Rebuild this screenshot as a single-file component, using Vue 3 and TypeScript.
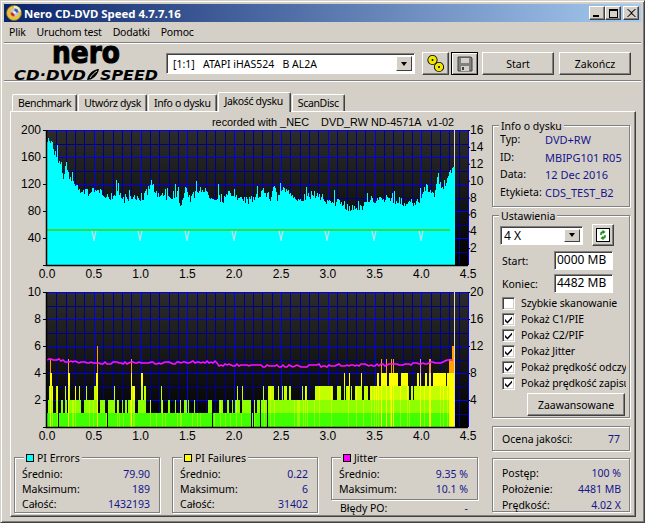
<template>
  <div class="window">
    <div class="titlebar">
      <svg class="app-icon" width="16" height="16" viewBox="0 0 16 16">
        <circle cx="8" cy="8" r="7.5" fill="#e8c040" stroke="#806820" stroke-width="0.8" />
        <path d="M8 .8a7.2 7.2 0 0 1 7 5.6L8 8z" fill="#f4ecc0" />
        <circle cx="8.5" cy="7.5" r="4" fill="#c0c8d8" />
        <path d="M8.5 3.5a4 4 0 0 1 4 4h-4z" fill="#3060c0" />
        <path d="M8.5 7.5v4a4 4 0 0 1-4-4z" fill="#d03020" />
        <circle cx="8.5" cy="7.5" r="1.3" fill="#fff" />
      </svg>
      <span class="title">Nero CD-DVD Speed 4.7.7.16</span>
      <div class="caption-buttons">
        <button type="button" class="caption-btn"><i class="glyph-min"></i></button>
        <button type="button" class="caption-btn"><i class="glyph-max"></i></button>
        <button type="button" class="caption-btn close">
          <svg width="9" height="8" viewBox="0 0 9 8"><path d="M1 0l3.5 3L8 0h1L5 4l4 4H8L4.500 5 1 8H0l4-4-4-4z" fill="#000" /></svg>
        </button>
      </div>
    </div>

    <div class="menu">
      <span v-for="item in menuItems" :key="item">{{ item }}</span>
    </div>

    <div class="toolbar">
      <svg class="logo" width="150" height="48" viewBox="0 0 150 48">
        <text x="44" y="25" class="logo-nero" textLength="68" lengthAdjust="spacingAndGlyphs">nero</text>
        <text x="6" y="42" class="logo-sub" textLength="72" lengthAdjust="spacingAndGlyphs">CD·DVD</text>
        <path d="M79 42c1-6 6-11 12-11-1 6-6 11-12 11z" fill="#000" />
        <path d="M82 40c2-3 4-5 7-7" stroke="#d4d0c8" stroke-width="1" fill="none" />
        <text x="92" y="42" class="logo-sub" textLength="58" lengthAdjust="spacingAndGlyphs">SPEED</text>
      </svg>
      <div class="combo drive-combo">
        <span class="combo-text">{{ driveLabel }}</span>
        <span class="combo-arrow"><i></i></span>
      </div>
      <button type="button" class="btn icon-btn">
        <svg width="20" height="20" viewBox="0 0 20 20">
          <g fill="none" stroke="#000" stroke-width="5">
            <circle cx="6.500" cy="6" r="2.600" />
            <circle cx="13" cy="13" r="2.600" />
          </g>
          <g fill="none" stroke="#f0e800" stroke-width="3.200">
            <circle cx="6.500" cy="6" r="2.600" />
            <circle cx="13" cy="13" r="2.600" />
          </g>
        </svg>
      </button>
      <button type="button" class="btn icon-btn save-btn">
        <svg width="16" height="16" viewBox="0 0 16 16">
          <path d="M1 1h13l1 1v13H1z" fill="#808080" stroke="#404040" />
          <rect x="4" y="2" width="8" height="5" fill="#d4d0c8" />
          <rect x="4" y="10" width="8" height="5" fill="#d4d0c8" />
          <rect x="5" y="11" width="2" height="3" fill="#404040" />
        </svg>
      </button>
      <button type="button" class="btn action-btn">Start</button>
      <button type="button" class="btn action-btn">Zakończ</button>
    </div>

    <div class="tabs">
      <span
        v-for="tab in tabs"
        :key="tab"
        class="tab"
        :class="{ active: tab === 'Jakość dysku' }"
      >{{ tab }}</span>
    </div>

    <div class="panel">
      <div class="main">
        <svg
          v-for="(chart, index) in charts"
          :key="chart.id"
          class="chart"
          :width="SVG_WIDTH"
          :height="chart.height"
        >
          <text v-if="index === 0" x="201" y="14" class="chart-title">{{ chartTitle }}</text>
          <g :transform="`translate(${PLOT_LEFT} ${chart.top})`">
            <rect :width="PLOT_WIDTH" :height="PLOT_HEIGHT" fill="url(#plotbg)" />
            <path :d="gridMinor" class="grid-minor" />
            <path :d="gridMajor" class="grid-major" />
            <template v-if="chart.id === 'pie'">
              <path :d="cyanPath" fill="#00ffff" shape-rendering="crispEdges" />
              <polyline points="0,100 403,100" class="speed-line" />
              <polyline
                v-for="x in notches"
                :key="x"
                :points="`${x - 2},101 ${x - 1},105 ${x},111 ${x + 1},105 ${x + 2},101`"
                class="notch"
              />
              <line :x1="DATA_END" :x2="DATA_END" y1="0" y2="37" class="end-line" />
            </template>
            <template v-else>
              <path
                v-for="layer in pifLayers"
                :key="layer.color"
                :d="layer.d"
                :fill="layer.color"
                shape-rendering="crispEdges"
              />
              <polyline :points="jitterPoints" class="jitter-line" />
              <line :x1="DATA_END" :x2="DATA_END" y1="0" :y2="PLOT_HEIGHT" class="end-line" />
            </template>
            <path :d="`M-.5 0V${PLOT_HEIGHT + .5}H${PLOT_WIDTH}`" class="axis" />
            <path :d="axisTicks(chart)" class="axis-tick" />

            <text
              v-for="label in chart.left"
              :key="label.text"
              x="-6"
              :y="label.y + 4"
              text-anchor="end"
              class="axis-label"
            >{{ label.text }}</text>
            <text
              v-for="label in chart.right"
              :key="label.text"
              :x="PLOT_WIDTH + 2"
              :y="label.y + 4"
              class="axis-label"
            >{{ label.text }}</text>
            <text
              v-for="label in xLabels"
              :key="label.text"
              :x="label.x"
              :y="PLOT_HEIGHT + 13"
              text-anchor="middle"
              class="axis-label"
            >{{ label.text }}</text>
          </g>
          <defs v-if="index === 0">
            <linearGradient id="plotbg" x1="0" y1="0" x2="0" y2="1">
              <stop offset="0" stop-color="#2c2c2c" />
              <stop offset="1" stop-color="#000" />
            </linearGradient>
          </defs>
        </svg>

        <div class="stats">
          <div v-for="stat in stats" :key="stat.name" class="stat-col">
            <div class="group stat-group">
              <span class="legend"><i class="swatch" :class="stat.swatch"></i>{{ stat.name }}</span>
              <div v-for="row in stat.rows" :key="row[0]" class="stat-row">
                <span>{{ row[0] }}</span><span class="value">{{ row[1] }}</span>
              </div>
            </div>
            <div v-if="stat.swatch === 'magenta'" class="po-row">
              <span>Błędy PO:</span><span class="value">-</span>
            </div>
          </div>
        </div>
      </div>

      <aside class="side">
        <div class="group info">
          <span class="legend">Info o dysku</span>
          <div v-for="row in discInfo" :key="row[0]" class="info-row">
            <span>{{ row[0] }}</span><span class="value">{{ row[1] }}</span>
          </div>
        </div>

        <div class="group settings">
          <span class="legend">Ustawienia</span>
          <div class="speed-row">
            <div class="combo speed-combo">
              <span class="combo-text">4 X</span>
              <span class="combo-arrow"><i></i></span>
            </div>
            <button type="button" class="btn refresh-btn">
              <svg width="14" height="14" viewBox="0 0 14 14">
                <rect x=".5" y=".5" width="13" height="13" fill="#fff" stroke="#000" />
                <path d="M5 7V5.500C5 4.500 5.800 4 7 4" fill="none" stroke="#109010" stroke-width="1.500" />
                <path d="M6.500 1.800L9.500 4 6.500 6.200z" fill="#109010" />
                <path d="M9 7v1.500C9 9.500 8.200 10 7 10" fill="none" stroke="#109010" stroke-width="1.500" />
                <path d="M7.500 7.800L4.500 10l3 2.200z" fill="#109010" />
              </svg>
            </button>
          </div>
          <div class="field-row"><span>Start:</span><span class="field">0000 MB</span></div>
          <div class="field-row"><span>Koniec:</span><span class="field">4482 MB</span></div>
          <div class="checks">
            <div v-for="item in options" :key="item.label" class="check-row">
              <span class="checkbox">
                <svg v-if="item.checked" width="9" height="9" viewBox="0 0 9 9"><path d="M1 4l2.500 2.500L8 1.500v2.300L3.500 8.500 1 6.200z" fill="#000" /></svg>
              </span>
              <span class="check-label">{{ item.label }}</span>
            </div>
          </div>
          <button type="button" class="btn advanced-btn">Zaawansowane</button>
        </div>

        <div class="group quality">
          <span>Ocena jakości:</span><span class="value">77</span>
        </div>

        <div class="group progress">
          <div v-for="row in progress" :key="row[0]" class="progress-row">
            <span>{{ row[0] }}</span><span class="value">{{ row[1] }}</span>
          </div>
        </div>
      </aside>
    </div>
  </div>
</template>

<script setup lang="ts">
const SVG_WIDTH = 481
const PLOT_LEFT = 36
const PLOT_WIDTH = 421
const PLOT_HEIGHT = 135
const DATA_END = 407.5
const PX_PER_UNIT = 93.6

interface AxisLabel {
  text: string
  y: number
}

interface Chart {
  id: string
  top: number
  height: number
  left: AxisLabel[]
  right: AxisLabel[]
}

const driveLabel = '[1:1]   ATAPI iHAS524   B AL2A'
const chartTitle = 'recorded with _NEC    DVD_RW ND-4571A  v1-02'

const menuItems = ['Plik', 'Uruchom test', 'Dodatki', 'Pomoc']
const tabs = ['Benchmark', 'Utwórz dysk', 'Info o dysku', 'Jakość dysku', 'ScanDisc']

const discInfo = [
  ['Typ:', 'DVD+RW'],
  ['ID:', 'MBIPG101 R05'],
  ['Data:', '12 Dec 2016'],
  ['Etykieta:', 'CDS_TEST_B2'],
]

const options = [
  { label: 'Szybkie skanowanie', checked: false },
  { label: 'Pokaż C1/PIE', checked: true },
  { label: 'Pokaż C2/PIF', checked: true },
  { label: 'Pokaż Jitter', checked: true },
  { label: 'Pokaż prędkość odczytu', checked: true },
  { label: 'Pokaż prędkość zapisu', checked: true },
]

const progress = [
  ['Postęp:', '100 %'],
  ['Położenie:', '4481 MB'],
  ['Prędkość:', '4.02 X'],
]

const stats = [
  {
    name: 'PI Errors',
    swatch: 'cyan',
    rows: [['Średnio:', '79.90'], ['Maksimum:', '189'], ['Całość:', '1432193']],
  },
  {
    name: 'PI Failures',
    swatch: 'yellow',
    rows: [['Średnio:', '0.22'], ['Maksimum:', '6'], ['Całość:', '31402']],
  },
  {
    name: 'Jitter',
    swatch: 'magenta',
    rows: [['Średnio:', '9.35 %'], ['Maksimum:', '10.1 %']],
  },
]

const evenLabels = (values: number[]) =>
  values.map((value, i) => ({ text: String(value), y: (i * PLOT_HEIGHT) / values.length }))

const charts: Chart[] = [
  {
    id: 'pie',
    top: 18,
    height: 168,
    left: evenLabels([200, 160, 120, 80, 40]),
    right: evenLabels([16, 14, 12, 10, 8, 6, 4, 2]),
  },
  {
    id: 'pif',
    top: 12,
    height: 163,
    left: evenLabels([10, 8, 6, 4, 2]),
    right: evenLabels([20, 16, 12, 8, 4]),
  },
]

const xLabels = Array.from({ length: 10 }, (_, i) => ({
  text: (i * 0.5).toFixed(1),
  x: i * 0.5 * PX_PER_UNIT,
}))

const notches = [47, 93, 140, 187, 234, 280, 327, 374]

// grid: one thin line every 0.1 on x, a bright one every 0.5
const gridMinor = (() => {
  let d = ''
  for (let i = 1; i <= 45; i++) {
    if (i % 5) d += `M${Math.round(i * 9.36) + 0.5} 0V${PLOT_HEIGHT}`
  }
  for (let i = 1; i < 10; i += 2) {
    d += `M0 ${Math.round(i * 13.5) + 0.5}H${PLOT_WIDTH}`
  }
  return d
})()

const gridMajor = (() => {
  let d = ''
  for (let i = 5; i <= 45; i += 5) {
    d += `M${Math.round(i * 9.36) + 0.5} 0V${PLOT_HEIGHT}`
  }
  for (let i = 0; i < 10; i += 2) {
    d += `M0 ${i * 13.5 + 0.5}H${PLOT_WIDTH}`
  }
  return d
})()

function axisTicks(chart: Chart) {
  let d = ''
  for (const label of chart.left) d += `M-4 ${label.y + 0.5}H0`
  for (const label of chart.right) d += `M${PLOT_WIDTH} ${label.y + 0.5}H${PLOT_WIDTH + 2}`
  d += `M0 ${PLOT_HEIGHT + 0.5}h-4`
  return d
}

// small repeatable generator so the noise is the same on every load
let seed = 7
function rand() {
  seed = (seed * 16807) % 2147483647
  return seed / 2147483647
}

// top edge of the PIE area, read off the reference: [x, y] in plot pixels
const cyanTop: [number, number][] = [
  [0, 8], [2, 10], [5, 10], [6, 20], [10, 28], [13, 30], [16, 50], [19, 35], [22, 45], [26, 52],
  [30, 57], [35, 60], [43, 62], [46, 67], [50, 57], [56, 62], [63, 67], [70, 58], [76, 68],
  [96, 67], [104, 53], [110, 65], [130, 67], [134, 73], [138, 55], [143, 68], [153, 57],
  [163, 65], [176, 68], [183, 62], [193, 69], [203, 70], [216, 60], [223, 67], [227, 53],
  [230, 68], [234, 59], [238, 58], [246, 69], [268, 63], [276, 70], [293, 72], [303, 77],
  [316, 75], [325, 68], [336, 70], [340, 66], [349, 70], [369, 73], [379, 57], [386, 65],
  [390, 53], [396, 55], [400, 48], [405, 40], [408, 37],
]

function cyanAt(x: number) {
  for (let i = 1; i < cyanTop.length; i++) {
    const [x1, y1] = cyanTop[i]
    if (x <= x1) {
      const [x0, y0] = cyanTop[i - 1]
      return y0 + ((y1 - y0) * (x - x0)) / (x1 - x0)
    }
  }
  return cyanTop[cyanTop.length - 1][1]
}

const cyanPath = (() => {
  let d = `M0 ${PLOT_HEIGHT}`
  for (let x = 0; x < DATA_END; x++) {
    const spike = rand() > 0.88 ? -13 * rand() : 0
    const y = Math.round(cyanAt(x) + rand() * 8 - 3 + spike)
    d += `V${y}H${x + 1}`
  }
  return `${d}V${PLOT_HEIGHT}Z`
})()

// PIF spans are start/end pairs in thirds of a pixel, read off two halves of the reference
const L = (v: number) => v / 3 - 37
const R = (v: number) => v / 3 + 203
const left = (spans: number[][]) => spans.map(([a, b]) => [L(a), L(b)] as [number, number])
const right = (spans: number[][]) => spans.map(([a, b]) => [R(a), R(b)] as [number, number])

const spansAt2 = [
  ...left([
    [113, 130], [137, 148], [152, 160], [165, 170], [180, 212], [222, 262], [270, 285], [292, 315],
    [320, 328], [336, 340], [345, 350], [355, 375], [385, 405], [410, 412], [420, 424], [440, 442],
    [455, 458], [475, 480], [495, 498], [510, 514], [522, 530], [535, 538], [552, 556], [595, 610],
    [628, 640], [652, 656], [665, 670], [675, 690], [697, 720],
  ]),
  ...right([[0, 5], [10, 15], [22, 640]]),
]

const spansAt3 = [
  ...left([
    [118, 128], [138, 147], [165, 168], [195, 198], [207, 210], [228, 231], [252, 262], [313, 315],
    [363, 375], [403, 407], [452, 455], [681, 684], [697, 699],
  ]),
  ...right([
    [40, 42], [53, 72], [85, 88], [97, 100], [103, 110], [116, 123], [156, 160], [164, 170],
    [195, 248], [262, 272], [288, 300], [303, 306], [316, 335], [343, 355], [360, 478], [482, 488],
    [492, 640],
  ]),
]

const spansAt4 = [
  ...left([[120, 126], [175, 180], [258, 263], [393, 399]]),
  ...right([
    [282, 285], [297, 300], [333, 336], [381, 388], [395, 412], [418, 445], [452, 475], [500, 508],
    [525, 530], [537, 543], [550, 588], [590, 612],
  ]),
]

const spansAt5 = [
  ...left([[120, 122], [173, 176], [363, 365], [261, 263]]),
  ...right([[393, 395], [408, 411], [423, 425], [429, 432], [510, 513], [537, 543], [597, 612]]),
]

const spansAt6 = [...left([[261, 263]]), ...right([[605, 612]])]

const inSpans = (spans: [number, number][], x: number) =>
  spans.some(([a, b]) => x + 0.5 >= a && x + 0.5 < b)

const levelColors = ['#40ff00', '#8cff00', '#c4ff00', '#ffff00', '#ffc800', '#ffa000']
const gaps = new Set([11, 60, 165, 204, 206, 213, 220])

const pifLayers = (() => {
  const paths = levelColors.map(() => '')
  const rowTop = (level: number) => PLOT_HEIGHT - Math.round(level * 13.5)
  for (let x = 0; x < 407; x++) {
    if (gaps.has(x)) continue
    let height = 1
    if (inSpans(spansAt2, x)) height = 2
    if (inSpans(spansAt3, x)) height = 3
    if (inSpans(spansAt4, x)) height = 4
    if (inSpans(spansAt5, x)) height = 5
    if (inSpans(spansAt6, x)) height = 6
    const boost = height >= 5 ? 3 : height === 4 && rand() > 0.85 ? 1 : 0
    const tint = height <= 3 && rand() > 0.85 ? 1 : 0
    for (let level = 1; level <= height; level++) {
      const color = Math.min(level - 1 + Math.max(boost, tint), level >= 5 ? 5 : 3)
      paths[color] += `M${x} ${rowTop(level)}h1V${rowTop(level - 1)}h-1Z`
    }
  }
  return levelColors.map((color, i) => ({ color, d: paths[i] }))
})()

const jitterPoints = (() => {
  const points: string[] = []
  const anchors: [number, number][] = [
    [0, 67], [20, 69], [50, 71], [100, 71], [168, 70], [172, 73], [230, 74], [330, 73], [380, 72], [407, 68],
  ]
  for (let x = 0; x <= 407; x += 2) {
    let i = 1
    while (i < anchors.length - 1 && x > anchors[i][0]) i++
    const [x0, y0] = anchors[i - 1]
    const [x1, y1] = anchors[i]
    const y = y0 + ((y1 - y0) * (x - x0)) / (x1 - x0)
    points.push(`${x},${Math.round(y + rand() * 2.4 - 1.2)}`)
  }
  return points.join(' ')
})()
</script>

<style scoped>
* {
  box-sizing: border-box;
}

.window {
  width: 645px;
  height: 523px;
  padding: 3px;
  overflow: hidden;
  background: #d4d0c8;
  color: #000;
  font-family: 'Noto Sans', 'Liberation Sans', sans-serif;
  font-size: 10.500px;
  border-top: 1px solid #d4d0c8;
  border-left: 1px solid #d4d0c8;
  border-right: 1px solid #404040;
  border-bottom: 1px solid #404040;
  box-shadow: inset 1px 1px 0 #fff, inset -1px -1px 0 #808080;
}

.titlebar {
  display: flex;
  align-items: center;
  height: 18px;
  padding: 0 2px;
  background: linear-gradient(90deg, #0a246a, #a6caf0);
  color: #fff;
}

.app-icon {
  flex: none;
  margin-right: 2px;
}

.title {
  font-weight: 700;
  font-size: 11.400px;
  white-space: nowrap;
}

.caption-buttons {
  display: flex;
  margin-left: auto;
}

.caption-btn {
  display: flex;
  align-items: center;
  justify-content: center;
  width: 16px;
  height: 14px;
  padding: 0;
  background: #d4d0c8;
  border: 1px solid;
  border-color: #fff #404040 #404040 #fff;
  box-shadow: inset -1px -1px 0 #808080;
}

.caption-btn.close {
  margin-left: 2px;
}

.glyph-min {
  display: block;
  width: 6px;
  height: 2px;
  margin: 6px 3px 0 0;
  background: #000;
}

.glyph-max {
  display: block;
  width: 9px;
  height: 9px;
  border: 1px solid #000;
  border-top-width: 2px;
}

.menu {
  display: flex;
  align-items: center;
  gap: 11px;
  height: 20px;
  padding-left: 5px;
  letter-spacing: -0.200px;
}

.toolbar {
  display: flex;
  align-items: flex-start;
  height: 39px;
  padding-top: 9px;
  border-top: 1px solid #808080;
  box-shadow: inset 0 1px 0 #fff;
  border-bottom: 1px solid #808080;
}

.logo {
  flex: none;
  margin: -14px 0 0 4px;
}

.logo-nero {
  font-family: 'DejaVu Sans', sans-serif;
  font-weight: 700;
  font-size: 30px;
  stroke: #000;
  stroke-width: 1.100px;
}

.logo-sub {
  font-family: 'DejaVu Sans', sans-serif;
  font-weight: 700;
  font-style: italic;
  font-size: 14px;
}

.combo {
  display: flex;
  align-items: center;
  height: 21px;
  background: #fff;
  border: 1px solid;
  border-color: #808080 #fff #fff #808080;
  box-shadow: inset 1px 1px 0 #404040;
  padding: 2px 2px 2px 6px;
}

.combo-text {
  flex: 1;
  white-space: pre;
}

.combo-arrow {
  display: flex;
  align-items: center;
  justify-content: center;
  width: 16px;
  height: 100%;
  background: #d4d0c8;
  border: 1px solid;
  border-color: #fff #404040 #404040 #fff;
}

.combo-arrow i {
  border: 3.500px solid transparent;
  border-top: 4px solid #000;
  border-bottom: 0;
}

.drive-combo {
  width: 249px;
  margin: 1px 0 0 8px;
}

.btn {
  display: flex;
  align-items: center;
  justify-content: center;
  padding: 0;
  background: #d4d0c8;
  color: #000;
  font: inherit;
  border: 1px solid;
  border-color: #fff #404040 #404040 #fff;
  box-shadow: inset -1px -1px 0 #808080;
}

.icon-btn {
  width: 27px;
  height: 23px;
  margin-left: 7px;
}

.save-btn {
  margin-left: 2px;
  border-color: #000;
  box-shadow: inset 1px 1px 0 #fff, inset -1px -1px 0 #808080;
}

.action-btn {
  width: 72px;
  height: 23px;
  margin-left: 4px;
}

.action-btn:last-child {
  margin-left: 5px;
}

.tabs {
  display: flex;
  align-items: flex-end;
  height: 30px;
  padding-left: 8px;
  border-top: 1px solid #fff;
  letter-spacing: -0.350px;
}

.tab {
  position: relative;
  height: 17px;
  padding: 1px 5px 0;
  margin-right: 1px;
  white-space: nowrap;
  border: 1px solid;
  border-color: #fff #404040 transparent #fff;
  border-bottom: 0;
  border-radius: 2px 2px 0 0;
  box-shadow: inset -1px 0 0 #808080;
}

.tab.active {
  height: 20px;
  padding: 1px 7px 0 6px;
  margin: 0 1px 0 0;
  background: #d4d0c8;
  top: 1px;
  z-index: 1;
}

.panel {
  display: flex;
  width: 626px;
  height: 406px;
  margin-left: 6px;
  border: 1px solid;
  border-color: #fff #404040 #404040 #fff;
  box-shadow: inset -1px -1px 0 #808080;
}

.main {
  flex: none;
  width: 481px;
}

.chart {
  display: block;
}

.chart-title {
  font-family: 'Liberation Sans', Arial, sans-serif;
  font-size: 10.850px;
  fill: #000;
  white-space: pre;
}

.axis-label {
  font-family: 'Liberation Sans', Arial, sans-serif;
  font-size: 12px;
  fill: #000;
}

.grid-minor {
  fill: none;
  stroke: #000090;
  stroke-width: 1;
}

.grid-major {
  fill: none;
  stroke: #0000f0;
  stroke-width: 1;
}

.speed-line {
  fill: none;
  stroke: #40d000;
  stroke-width: 1.500;
}

.notch {
  fill: none;
  stroke: #c8e0e0;
  stroke-width: 1.200;
}

.end-line {
  stroke: #d8d8d8;
  stroke-width: 1;
}

.jitter-line {
  fill: none;
  stroke: #ff10ff;
  stroke-width: 1.500;
}

.axis {
  fill: none;
  stroke: #000;
  stroke-width: 1.500;
}

.axis-tick {
  fill: none;
  stroke: #000;
  stroke-width: 1;
}

.stats {
  display: flex;
  gap: 12px;
  margin: 14px 0 0 3px;
}

.stat-col {
  width: 146px;
}

.stat-col:last-child {
  width: 147px;
  margin-left: 1px;
}

.group {
  position: relative;
  border: 1px solid #808080;
  box-shadow: 1px 1px 0 #fff, inset 1px 1px 0 #fff;
}

.legend {
  position: absolute;
  top: -7px;
  left: 9px;
  padding: 0 2px;
  display: flex;
  align-items: center;
  background: #d4d0c8;
  white-space: nowrap;
}

.swatch {
  display: block;
  width: 6px;
  height: 6px;
  margin-right: 3px;
  border: 1px solid #000;
  box-sizing: content-box;
}

.swatch.cyan {
  background: #00ffff;
}

.swatch.yellow {
  background: #ffff00;
}

.swatch.magenta {
  background: #ff00ff;
}

.info .legend,
.settings .legend {
  left: 6px;
}

.stat-group {
  padding: 9px 9px 0 7px;
  min-height: 43px;
}

.stat-group:has(.stat-row:nth-child(4)) {
  height: 56px;
}

.stat-row,
.po-row,
.progress-row {
  display: flex;
  justify-content: space-between;
  height: 15px;
  line-height: 15px;
  white-space: nowrap;
}

.po-row {
  padding: 0 10px 0 9px;
  margin-top: 1px;
}

.value {
  color: #14148c;
}

.side {
  display: flex;
  flex-direction: column;
  gap: 7px;
  width: 138px;
  margin-top: 13px;
}

.info {
  height: 82px;
  padding: 5px 0 0 7px;
  margin-bottom: 1px;
}

.info-row {
  display: grid;
  grid-template-columns: 45px 1fr;
  height: 17.500px;
  line-height: 17.500px;
  white-space: nowrap;
}

.info-row .value {
  font-size: 11px;
}

.settings {
  height: 203px;
  padding: 8px 3px 0 7px;
  margin-bottom: 1px;
}

.speed-row {
  display: flex;
  align-items: center;
  gap: 9px;
  height: 22px;
}

.speed-combo {
  width: 83px;
  height: 19px;
  padding-left: 3px;
}

.speed-combo .combo-text {
  font-size: 12px;
}

.refresh-btn {
  width: 22px;
  height: 22px;
}

.field-row {
  display: flex;
  align-items: center;
  justify-content: space-between;
  height: 19px;
  margin: 5px 13px 0 2px;
}

.field-row + .field-row {
  margin-top: 4px;
}

.field {
  width: 59px;
  height: 19px;
  line-height: 15px;
  padding-left: 2px;
  background: #fff;
  font-size: 12px;
  border: 1px solid;
  border-color: #808080 #fff #fff #808080;
  box-shadow: inset 1px 1px 0 #404040;
}

.checks {
  margin: 2px 0 0 2px;
  overflow: hidden;
  letter-spacing: -0.100px;
}

.check-row {
  display: flex;
  align-items: center;
  gap: 6px;
  height: 16px;
  white-space: nowrap;
}

.checkbox {
  display: flex;
  align-items: center;
  justify-content: center;
  flex: none;
  width: 13px;
  height: 13px;
  background: #fff;
  border: 1px solid;
  border-color: #808080 #fff #fff #808080;
  box-shadow: inset 1px 1px 0 #404040, inset -1px -1px 0 #d4d0c8;
}

.advanced-btn {
  width: 98px;
  height: 23px;
  margin: 2px 0 0 27px;
}

.quality {
  display: flex;
  align-items: center;
  justify-content: space-between;
  height: 25px;
  padding: 0 9px;
}

.progress {
  height: 54px;
  padding: 6px 8px 0 9px;
}

.progress-row {
  height: 16px;
  line-height: 16px;
}
</style>

<style>
html,
body {
  margin: 0;
  background: #d4d0c8;
}
</style>
